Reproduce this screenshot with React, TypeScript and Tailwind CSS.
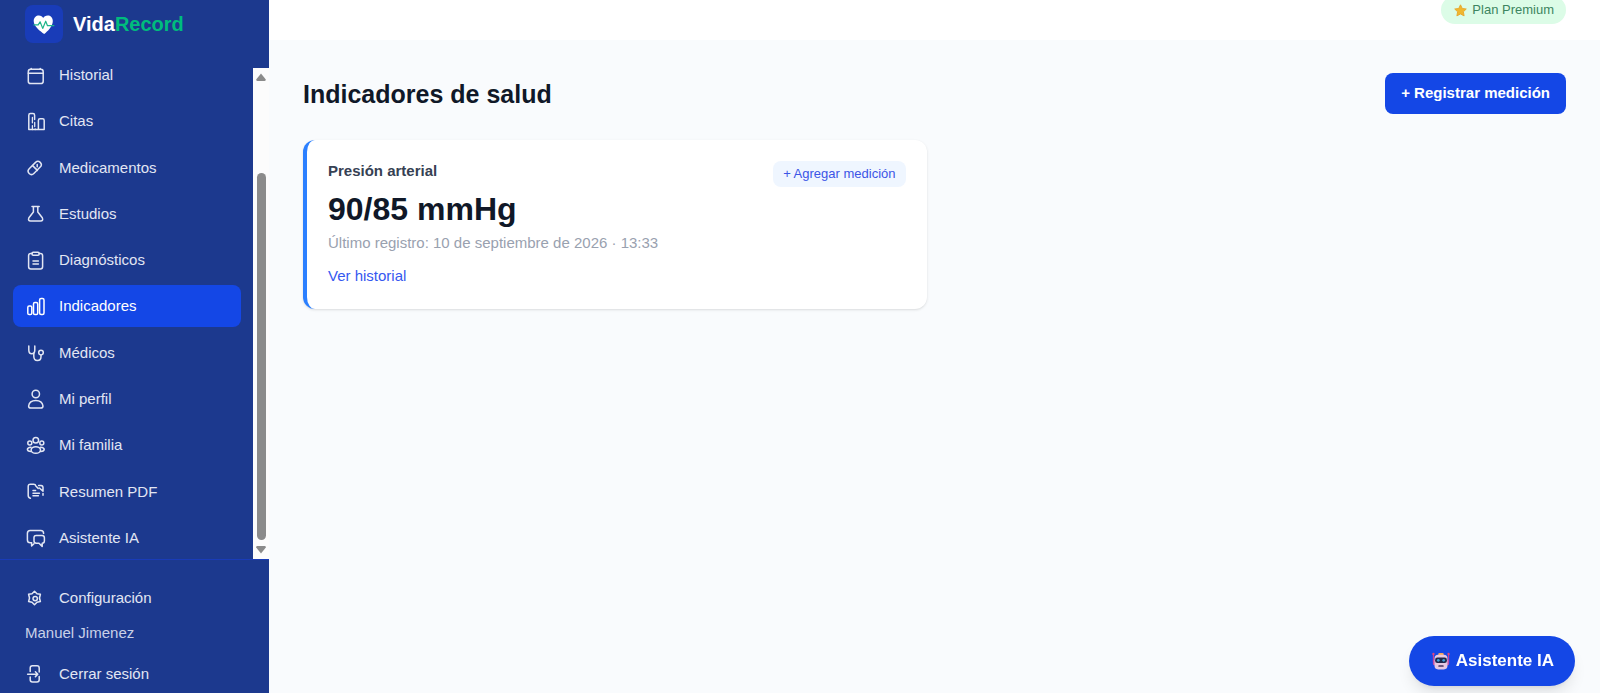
import type { ReactNode } from 'react';

function Icon({ children }: { children: ReactNode }) {
  return (
    <svg
      viewBox="0 0 20 20"
      className="size-5 shrink-0"
      fill="none"
      stroke="currentColor"
      strokeWidth="1.5"
      strokeLinecap="round"
      strokeLinejoin="round"
      aria-hidden="true"
    >
      {children}
    </svg>
  );
}

const navItems: { label: string; icon: ReactNode; active?: boolean }[] = [
  {
    label: 'Historial',
    icon: (
      <>
        <rect x="2.3" y="4.3" width="14.9" height="14.3" rx="2.4" />
        <path d="M2.3 8.3h14.9M5.2 4.2V3.5M14.2 4.2V3.5" />
      </>
    ),
  },
  {
    label: 'Citas',
    icon: (
      <>
        <path d="M2.8 18.6V4.2Q2.8 2.6 4.4 2.6H7Q8.6 2.6 8.6 4.2V8.4M2.8 18.6H18.2V9.4Q18.2 7.8 16.6 7.8H14Q12.4 7.8 12.4 9.4V18.6" />
        <path d="M6.4 6.4v5.4M8.7 11.4v4.2M6.4 14.6v4M9.2 18v.6" strokeWidth="1.3" />
      </>
    ),
  },
  {
    label: 'Medicamentos',
    icon: (
      <>
        <rect x="0.9" y="6.6" width="15.6" height="6.6" rx="3.3" transform="rotate(-45 8.7 9.9)" />
        <path d="M6.6 7.6l4.8 4.8M11.2 6.6v2.2" />
      </>
    ),
  },
  {
    label: 'Estudios',
    icon: (
      <path d="M6 2.6h7.2M7.4 2.6V8L2.9 13.8Q1.6 17 4.6 17H14.6Q17.6 17 16.3 13.8L11.8 8V2.6" />
    ),
  },
  {
    label: 'Diagnósticos',
    icon: (
      <>
        <path d="M6 3.6H4.8Q2.6 3.6 2.6 5.8V16.8Q2.6 19 4.8 19H14.4Q16.6 19 16.6 16.8V5.8Q16.6 3.6 14.4 3.6H13.2" />
        <rect x="6" y="2.2" width="7.2" height="3" rx="1.2" />
        <path d="M7 10.9h5.4M7 14h5.4" />
      </>
    ),
  },
  {
    label: 'Indicadores',
    active: true,
    icon: (
      <>
        <rect x="1.8" y="10" width="4" height="8.6" rx="1.4" />
        <rect x="7.5" y="6.5" width="4.2" height="12.1" rx="1.4" />
        <rect x="13.6" y="2.4" width="4.4" height="16.2" rx="1.5" />
      </>
    ),
  },
  {
    label: 'Médicos',
    icon: (
      <>
        <path d="M2.8 3V7Q2.8 10.8 5.8 10.8T8.8 7V3" />
        <path d="M7.8 10.2V13Q7.8 17.6 11.4 17.6T15 13.8V12" />
        <circle cx="15" cy="9.6" r="2.3" />
      </>
    ),
  },
  {
    label: 'Mi perfil',
    icon: (
      <>
        <circle cx="9.8" cy="5" r="3.7" />
        <path d="M2.6 17Q3.4 11.5 9.8 11.5T17 17Q17 19.1 14.6 19.1H5Q2.6 19.1 2.6 17Z" />
      </>
    ),
  },
  {
    label: 'Mi familia',
    icon: (
      <>
        <circle cx="9.8" cy="5.3" r="2.8" />
        <circle cx="3.8" cy="7.9" r="2" />
        <circle cx="15.8" cy="7.9" r="2" />
        <ellipse cx="9.8" cy="15" rx="4.7" ry="3.3" />
        <path d="M5 12.2Q1.4 12.4 1.4 14.6 1.4 16.4 5 16.6M14.6 12.2Q18.2 12.4 18.2 14.6 18.2 16.4 14.6 16.6" />
      </>
    ),
  },
  {
    label: 'Resumen PDF',
    icon: (
      <>
        <path d="M4.4 16.2Q2.2 15.6 2.2 13.4V4.4Q2.2 2.2 4.4 2.2H7.6Q9.6 2.2 9.8 4L12.2 6.4" />
        <path d="M7 8.6h2.6M7 11.2h6.4M7 13.8h5.4" />
        <path d="M12.6 3.4H15Q17 3.6 17 5.6V9.2L13.4 6M17 11.6V13.2" />
      </>
    ),
  },
  {
    label: 'Asistente IA',
    icon: (
      <>
        <path d="M5.4 14.8H4.2Q1.4 14.8 1.4 12V5.4Q1.4 2.6 4.2 2.6H14.8Q17.6 2.6 17.6 5.4" />
        <path d="M5.6 14.8v3.2l2.4-2.2" />
        <path d="M10.2 7.4H16Q18.4 7.4 18.4 9.8V13Q18.4 15.2 16.2 15.2V18.4L13 15.2H10.2Q8 15.2 8 13V9.6Q8 7.4 10.2 7.4Z" />
      </>
    ),
  },
];

function Logo() {
  return (
    <svg viewBox="0 0 38 38" className="size-[38px] shrink-0" aria-hidden="true">
      <rect width="38" height="38" rx="8" fill="#193cb8" />
      <path
        d="M19.2 29C15.4 26.3 8.7 21.5 8.7 16 8.7 12.4 11.2 10.4 13.9 10.4 16 10.4 17.4 11.4 18.2 13 19 11.4 20.6 10.4 22.8 10.4 25.4 10.4 27.8 12.4 27.8 16 27.8 21.5 22.6 26.3 19.2 29Z"
        fill="#fff"
      />
      <path
        d="M8.4 19.9h4.8l1.9-3.1 2.6 6.6 3-7.2 1.8 4.5h6.8"
        fill="none"
        stroke="#1fb58a"
        strokeWidth="1.2"
        strokeLinejoin="round"
      />
    </svg>
  );
}

function Star() {
  return (
    <svg viewBox="0 0 14 14" className="size-[13px]" aria-hidden="true">
      <path
        d="M7 .9 8.9 4.8 13.2 5.4 10.1 8.4 10.9 12.8 7 10.7 3.1 12.8 3.9 8.4.8 5.4 5.1 4.8Z"
        fill="#f0b72f"
        stroke="#e6a62c"
        strokeWidth="1"
        strokeLinejoin="round"
      />
    </svg>
  );
}

function Robot() {
  return (
    <svg viewBox="0 0 20 20" className="size-[18px]" aria-hidden="true">
      <path d="M1.6 2.6v8M18.4 2.6v8" stroke="#c23f96" strokeWidth="1.3" />
      <circle cx="1.6" cy="2.2" r="1.3" fill="#e0457c" />
      <circle cx="18.4" cy="2.2" r="1.3" fill="#e0457c" />
      <rect x="1" y="8.6" width="3" height="6" rx="1.2" fill="#c24fa8" />
      <rect x="16" y="8.6" width="3" height="6" rx="1.2" fill="#c24fa8" />
      <rect x="7" y="1" width="6" height="3.4" rx="1.2" fill="#f2a65e" />
      <rect x="2.8" y="3" width="14.4" height="16.4" rx="4" fill="#e6c9e2" />
      <rect x="3.4" y="6.2" width="13.2" height="6" rx="2.6" fill="#1f2749" />
      <circle cx="7" cy="9.2" r="1.5" fill="#3fa0d8" />
      <circle cx="13" cy="9.2" r="1.5" fill="#3fa0d8" />
      <rect x="7" y="14.6" width="6" height="1.9" rx="0.8" fill="#4b3560" />
    </svg>
  );
}

function Scrollbar() {
  return (
    <div className="flex w-4 shrink-0 flex-col items-center bg-[#fcfcfc] py-[5px]" aria-hidden="true">
      <svg viewBox="0 0 10 8" className="h-2 w-[10px]">
        <path d="M5 .5 9.8 6.6Q10 8 8.6 8H1.4Q0 8 .2 6.6Z" fill="#8b8b8b" />
      </svg>
      <div className="min-h-0 w-full flex-[92]" />
      <div className="min-h-0 w-[9px] flex-[367] rounded-full bg-[#8b8b8b]" />
      <div className="h-[6px]" />
      <svg viewBox="0 0 10 8" className="h-2 w-[10px]">
        <path d="M5 7.5 9.8 1.4Q10 0 8.6 0H1.4Q0 0 .2 1.4Z" fill="#8b8b8b" />
      </svg>
    </div>
  );
}

function Sidebar() {
  return (
    <aside className="flex w-[269px] shrink-0 flex-col bg-[#1c398e] text-[15px] leading-5 text-[#e2e6f3]">
      <div className="flex h-[68px] shrink-0 items-start gap-[10px] pt-[5px] pl-[25px]">
        <Logo />
        <span className="text-xl leading-[38px] font-bold text-white">
          Vida<span className="text-[#00bc7d]">Record</span>
        </span>
      </div>
      <div className="flex min-h-0 flex-1">
        <nav className="flex min-w-0 flex-1 flex-col pr-3 pl-[13px]">
          <ul className="-mt-[14px] flex flex-1 flex-col justify-between">
            {navItems.map((item) => (
              <li key={item.label}>
                <a
                  href="#"
                  aria-current={item.active ? 'page' : undefined}
                  className={
                    item.active
                      ? 'flex h-[42px] items-center gap-[13px] rounded-lg bg-[#1447e6] px-[13px] text-white'
                      : 'flex h-[42px] items-center gap-[13px] rounded-lg px-[13px]'
                  }
                >
                  <Icon>{item.icon}</Icon>
                  {item.label}
                </a>
              </li>
            ))}
          </ul>
        </nav>
        <Scrollbar />
      </div>
      <div className="flex h-[134px] shrink-0 flex-col border-t border-[#193cb8] px-[13px] pt-[17px]">
        <a href="#" className="flex h-[42px] shrink-0 items-center gap-[13px] px-[13px]">
          <Icon>
            <path d="M8.5 3.2 11 5.7 14.4 6.3 13.5 10 14.4 13.6 11 14.3 8.5 16.8 6 14.3 2.6 13.6 3.5 10 2.6 6.3 6 5.7Z" />
            <circle cx="9.2" cy="10.6" r="2.2" />
          </Icon>
          Configuración
        </a>
        <p className="px-3 leading-7 text-[#c9d1e8]">Manuel Jimenez</p>
        <button type="button" className="mt-1 flex h-[42px] shrink-0 items-center gap-[13px] px-[13px] pt-[3px] text-left">
          <Icon>
            <path d="M4.2 7.4V4Q4.2 1.8 6.4 1.8H11Q13.2 1.8 13.2 4V8M13.2 12.4V15.8Q13.2 18 11 18H6.4Q4.2 18 4.2 15.8V13" />
            <path d="M1.6 10.2H11.6M9.4 7.8 11.8 10.2 9.4 12.6" />
          </Icon>
          Cerrar sesión
        </button>
      </div>
    </aside>
  );
}

export default function App() {
  return (
    <div className="flex h-screen overflow-hidden bg-[#f9fbfd] font-['Liberation_Sans',Arial,sans-serif]">
      <Sidebar />
      <div className="flex min-w-0 flex-1 flex-col">
        <header className="flex h-10 shrink-0 items-end justify-end overflow-hidden bg-white px-[34px] pb-4">
          <span className="flex h-7 shrink-0 items-center gap-[5px] rounded-full bg-[#dcfce7] pr-3 pl-[13px] text-[13px] text-[#3d8560]">
            <Star />
            Plan Premium
          </span>
        </header>
        <main className="flex-1 px-[34px] pt-[33px]">
          <div className="flex items-center justify-between">
            <h1 className="text-[25px] leading-8 font-bold text-[#101828]">Indicadores de salud</h1>
            <button type="button" className="h-[41px] rounded-lg bg-[#1447e6] px-4 text-[15px] font-bold text-white">
              + Registrar medición
            </button>
          </div>
          <div className="mt-[26px] grid grid-cols-2 gap-4">
            <section className="flex items-start justify-between rounded-xl border-l-4 border-[#2b7fff] bg-white px-[21px] pt-[21px] pb-[23px] shadow-sm">
              <div>
                <h2 className="text-[15px] leading-5 font-bold text-[#364153]">Presión arterial</h2>
                <p className="mt-2 text-[32px] leading-10 font-bold text-[#101828]">90/85 mmHg</p>
                <p className="mt-1 text-[15px] leading-5 text-[#99a1af]">
                  Último registro: 10 de septiembre de 2026 · 13:33
                </p>
                <a href="#" className="mt-[13px] block text-[15px] leading-5 text-[#3558f0]">
                  Ver historial
                </a>
              </div>
              <button
                type="button"
                className="h-[26px] rounded-lg bg-[#eff6ff] px-[10px] text-[13px] text-[#3c55e6]"
              >
                + Agregar medición
              </button>
            </section>
          </div>
        </main>
      </div>
      <button
        type="button"
        className="fixed right-[25px] bottom-[7px] flex h-[50px] items-center gap-[6px] rounded-full bg-[#1447e6] pr-[21px] pl-[23px] text-[17px] font-bold text-white shadow-lg"
      >
        <Robot />
        Asistente IA
      </button>
    </div>
  );
}
